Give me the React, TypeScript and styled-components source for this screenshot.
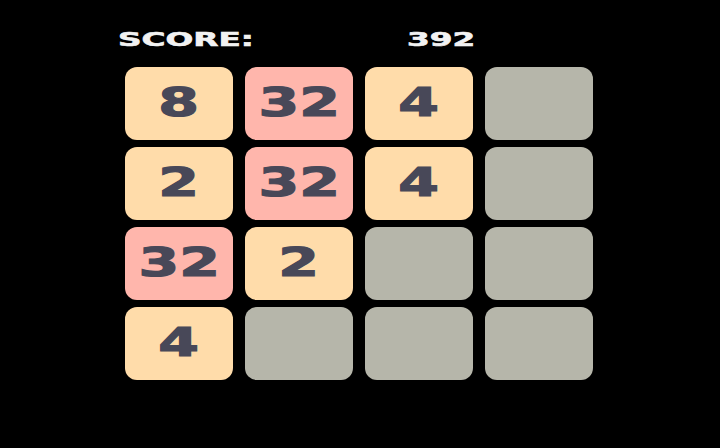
import React from 'react';
import styled, { createGlobalStyle } from 'styled-components';

const GlobalStyle = createGlobalStyle`
  html, body {
    margin: 0;
    padding: 0;
    background: #000;
  }
`;

const Screen = styled.div`
  width: 720px;
  height: 448px;
  background: #000;
  font-family: 'DejaVu Sans', 'Liberation Sans', sans-serif;
  font-weight: bold;
  overflow: hidden;
`;

const ScoreBar = styled.div`
  display: flex;
  align-items: center;
  height: 22px;
  padding: 28px 0 0 118px;
  color: #f2f2f2;
  font-size: 19px;
  line-height: 22px;
`;

// pixel font is very wide, so stretch the glyphs
const Stretched = styled.span`
  display: inline-block;
  transform: scaleX(1.72);
  transform-origin: left center;
  -webkit-text-stroke: 0.6px #f2f2f2;
`;

const ScoreLabel = styled.div`
  width: 289px;
`;

const ScoreValue = styled.div``;

const Board = styled.div`
  display: grid;
  grid-template-columns: repeat(4, 108px);
  grid-auto-rows: 73px;
  gap: 7px 12px;
  margin: 17px 0 0 125px;
`;

const tileColors: Record<number, string> = {
  0: '#b6b6aa',
  2: '#ffdcaa',
  4: '#ffdcaa',
  8: '#ffdcaa',
  32: '#ffb6ac',
};

const Tile = styled.div<{ $value: number }>`
  display: flex;
  align-items: center;
  justify-content: center;
  padding-bottom: 3px;
  box-sizing: border-box;
  border-radius: 12px;
  background: ${p => tileColors[p.$value] ?? '#ffdcaa'};
  color: #484858;
  font-size: 39px;
  line-height: 1;
`;

const TileNumber = styled.span`
  display: inline-block;
  transform: scaleX(1.5);
  -webkit-text-stroke: 1.2px #484858;
`;

const grid = [
  [8, 32, 4, 0],
  [2, 32, 4, 0],
  [32, 2, 0, 0],
  [4, 0, 0, 0],
];

const App: React.FC = () => {
  return (
    <Screen>
      <GlobalStyle />
      <ScoreBar>
        <ScoreLabel><Stretched>SCORE:</Stretched></ScoreLabel>
        <ScoreValue><Stretched>392</Stretched></ScoreValue>
      </ScoreBar>
      <Board>
        {grid.flat().map((v, i) => (
          <Tile key={i} $value={v}>
            {v > 0 && <TileNumber>{v}</TileNumber>}
          </Tile>
        ))}
      </Board>
    </Screen>
  );
};

export default App;
